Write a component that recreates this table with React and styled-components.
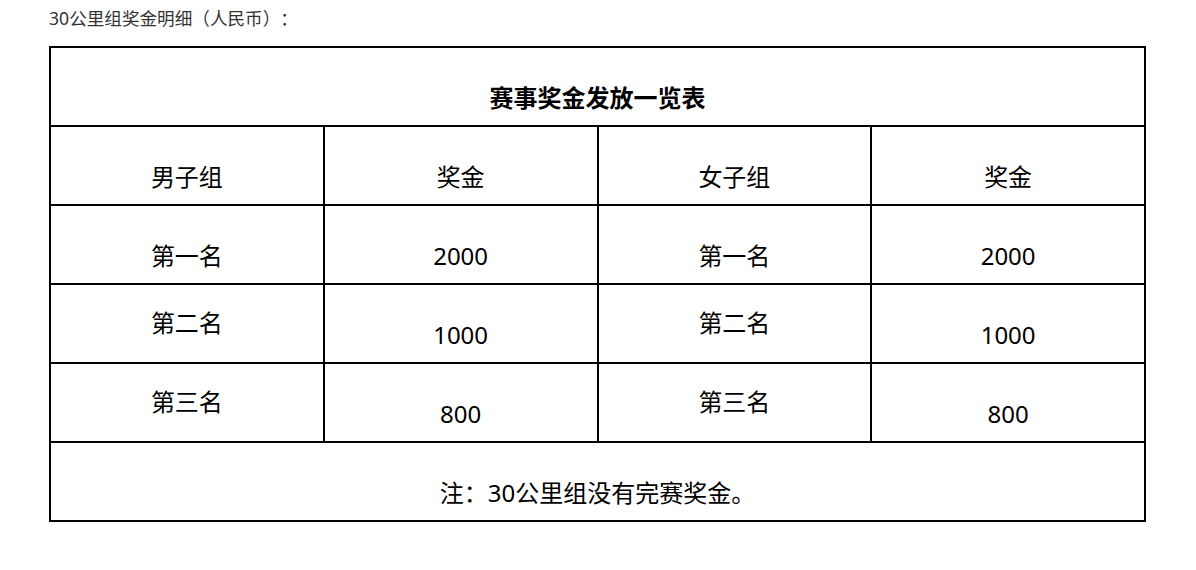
import React from "react";
import styled, { createGlobalStyle } from "styled-components";

const GlobalStyle = createGlobalStyle`
  body {
    margin: 0;
    background: #fff;
    font-family: "Noto Sans", "Noto Sans CJK SC", sans-serif;
    text-spacing-trim: space-all;
  }
`;

const Page = styled.div`
  padding: 6px 0 0 49px;
`;

const Caption = styled.p`
  margin: 0 0 16px;
  font-size: 17.6px;
  line-height: 24px;
  color: #333;
`;

const Table = styled.table`
  width: 1097px;
  border-collapse: collapse;
  table-layout: fixed;
  color: #000;
`;

const Row = styled.tr`
  height: 79px;
`;

const Cell = styled.td`
  border: 2px solid #000;
  box-sizing: border-box;
  padding: ${(p) => (p.$high ? "21px" : "33px")} 4px 0;
  vertical-align: top;
  text-align: center;
  font-size: 24px;
  line-height: 34px;
  font-weight: ${(p) => (p.$bold ? 700 : 400)};
`;

const prizes = [
  { men: "第一名", menPrize: "2000", women: "第一名", womenPrize: "2000", high: false },
  { men: "第二名", menPrize: "1000", women: "第二名", womenPrize: "1000", high: true },
  { men: "第三名", menPrize: "800", women: "第三名", womenPrize: "800", high: true },
];

export default function App() {
  return (
    <>
      <GlobalStyle />
      <Page>
        <Caption>30公里组奖金明细（人民币）：</Caption>
        <Table>
          <tbody>
            <Row>
              <Cell colSpan={4} $bold>赛事奖金发放一览表</Cell>
            </Row>
            <Row>
              <Cell>男子组</Cell>
              <Cell>奖金</Cell>
              <Cell>女子组</Cell>
              <Cell>奖金</Cell>
            </Row>
            {prizes.map((r) => (
              <Row key={r.men}>
                <Cell $high={r.high}>{r.men}</Cell>
                <Cell>{r.menPrize}</Cell>
                <Cell $high={r.high}>{r.women}</Cell>
                <Cell>{r.womenPrize}</Cell>
              </Row>
            ))}
            <Row>
              <Cell colSpan={4}>注：30公里组没有完赛奖金。</Cell>
            </Row>
          </tbody>
        </Table>
      </Page>
    </>
  );
}
